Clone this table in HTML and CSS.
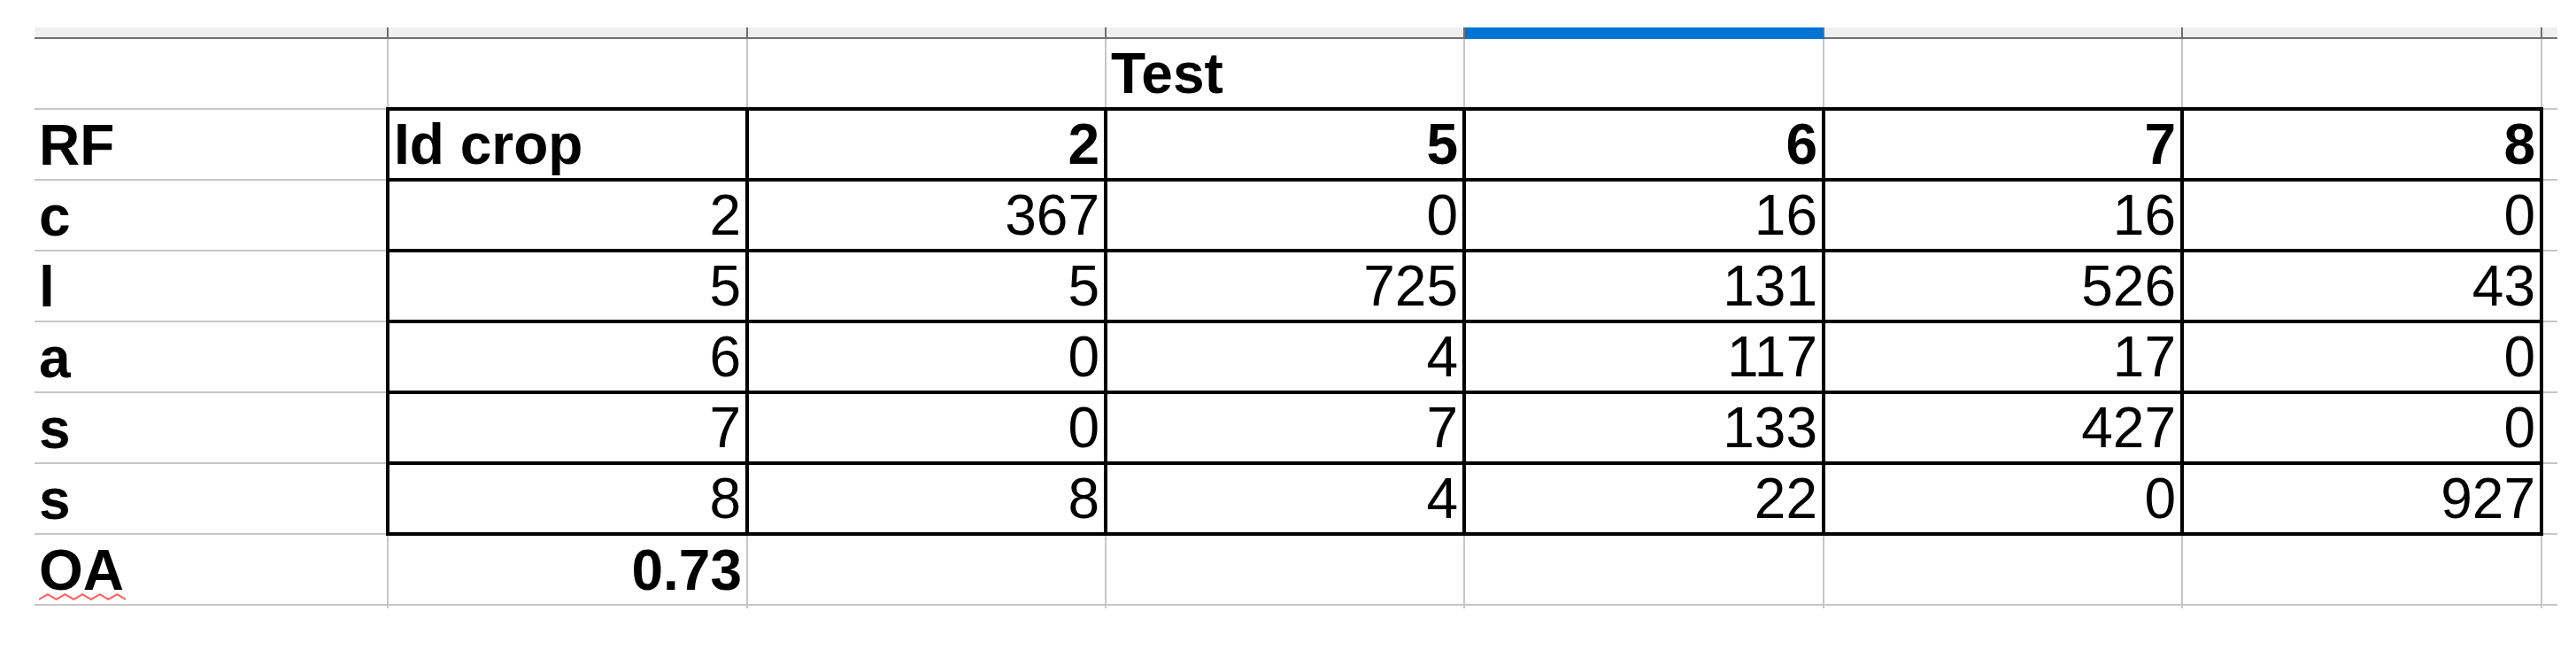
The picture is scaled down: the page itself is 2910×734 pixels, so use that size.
FILE: index.html
```html
<!DOCTYPE html>
<html>
<head>
<meta charset="utf-8">
<link rel="stylesheet" href="styles.css">
</head>
<body>
<div class="page">
<table class="sheet">
  <colgroup>
    <col class="c-a"><col class="c-6"><col class="c-5"><col class="c-5"><col class="c-6"><col class="c-5"><col class="c-6"><col class="c-x">
  </colgroup>
  <tr class="colhead">
    <td></td><td></td><td></td><td></td><td class="sel"></td><td></td><td></td><td class="last"></td>
  </tr>
  <tr>
    <td></td><td></td><td></td><td class="b">Test</td><td></td><td></td><td></td><td class="last"></td>
  </tr>
  <tr>
    <td class="b">RF</td><td class="t b">Id crop</td><td class="t b n">2</td><td class="t b n">5</td><td class="t b n">6</td><td class="t b n">7</td><td class="t b n">8</td><td class="last"></td>
  </tr>
  <tr>
    <td class="b">c</td><td class="t n">2</td><td class="t n">367</td><td class="t n">0</td><td class="t n">16</td><td class="t n">16</td><td class="t n">0</td><td class="last"></td>
  </tr>
  <tr>
    <td class="b">l</td><td class="t n">5</td><td class="t n">5</td><td class="t n">725</td><td class="t n">131</td><td class="t n">526</td><td class="t n">43</td><td class="last"></td>
  </tr>
  <tr>
    <td class="b">a</td><td class="t n">6</td><td class="t n">0</td><td class="t n">4</td><td class="t n">117</td><td class="t n">17</td><td class="t n">0</td><td class="last"></td>
  </tr>
  <tr>
    <td class="b">s</td><td class="t n">7</td><td class="t n">0</td><td class="t n">7</td><td class="t n">133</td><td class="t n">427</td><td class="t n">0</td><td class="last"></td>
  </tr>
  <tr>
    <td class="b">s</td><td class="t n">8</td><td class="t n">8</td><td class="t n">4</td><td class="t n">22</td><td class="t n">0</td><td class="t n">927</td><td class="last"></td>
  </tr>
  <tr>
    <td class="b"><span class="spell">OA<svg class="squiggle" width="100" height="10" viewBox="0 0 100 10"><polyline points="0,8 10,2 20,8 30,2 40,8 50,2 60,8 70,2 80,8 90,2 100,8" fill="none" stroke="#ff5c5c" stroke-width="2"/></svg></span></td><td class="b n">0.73</td><td></td><td></td><td></td><td></td><td></td><td class="last"></td>
  </tr>
  <tr class="tail">
    <td></td><td></td><td></td><td></td><td></td><td></td><td></td><td class="last"></td>
  </tr>
</table>
</div>
</body>
</html>
```

FILE: styles.css
```css
html, body {
  margin: 0;
  padding: 0;
  background: #ffffff;
}

.page {
  padding: 31px 0 0 39px;
}

.sheet {
  border-collapse: collapse;
  table-layout: fixed;
  width: 2850px;
  font-family: "Liberation Sans", Arial, sans-serif;
  font-size: 64px;
  color: #000;
}

.c-a { width: 399px; }
.c-5 { width: 405px; }
.c-6 { width: 406px; }
.c-x { width: 18px; }

.sheet td {
  box-sizing: border-box;
  height: 80px;
  padding: 0 5px 1px 5px;
  line-height: 74px;
  vertical-align: bottom;
  white-space: nowrap;
  overflow: visible;
  border-right: 2px solid #c6c6c6;
  border-bottom: 2px solid #c6c6c6;
}

.sheet td.last {
  border-right: none;
}

.sheet tr.colhead td {
  height: 12px;
  padding: 0;
  line-height: 0;
  background: #efefef;
  border-right: 2px solid #6e6e6e;
  border-bottom: 2px solid #727272;
}

.sheet tr.colhead td.last {
  border-right: none;
}

.sheet tr.colhead td.sel {
  background: #0074d4;
  border-bottom-color: #0074d4;
}

.sheet tr.tail td {
  height: 4px;
  padding: 0;
  line-height: 0;
  border-bottom: none;
}

.sheet td.t {
  border: 4px solid #000;
}

.b { font-weight: bold; }

.n { text-align: right; }

.spell {
  position: relative;
  display: inline-block;
}

.squiggle {
  position: absolute;
  left: 0;
  bottom: 2px;
  width: 98px;
  height: 10px;
}
```
